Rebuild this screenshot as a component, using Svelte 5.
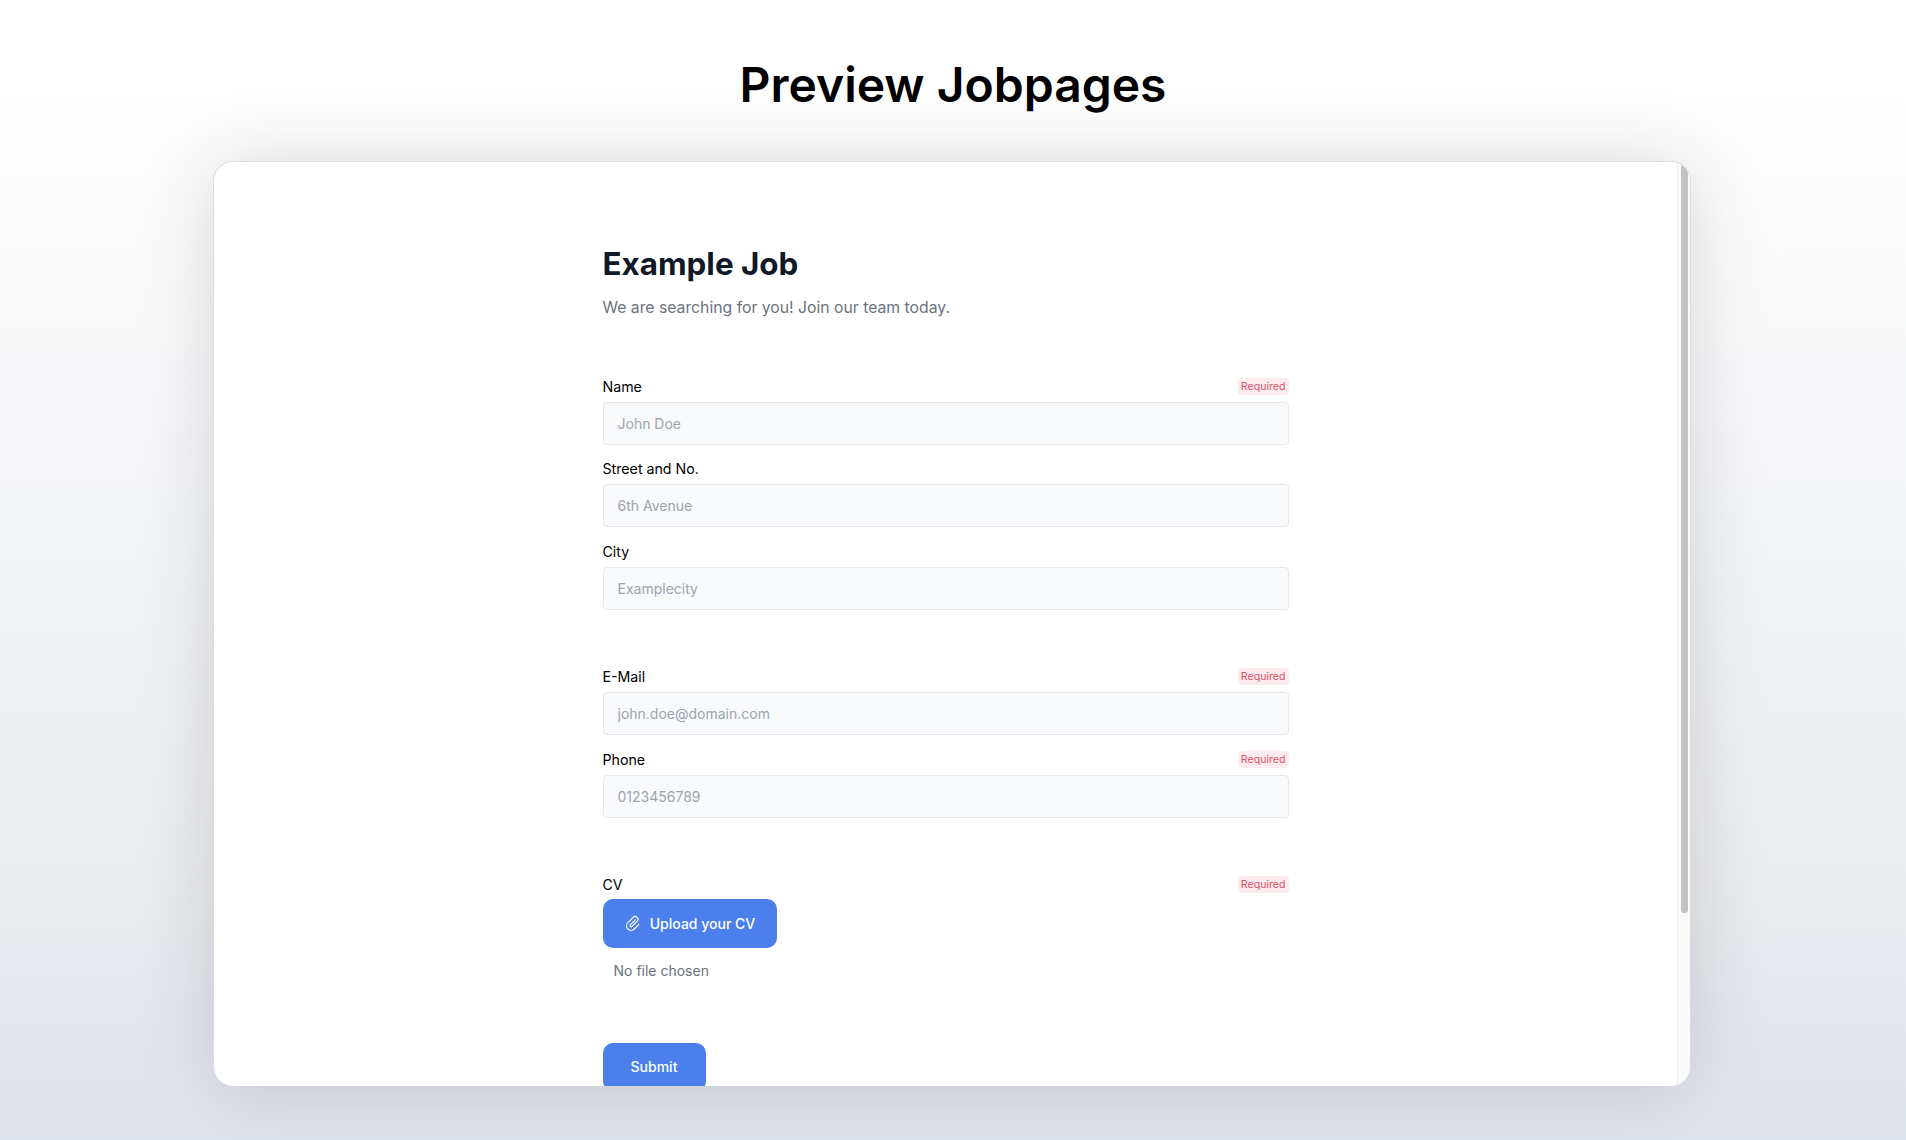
<script>
	const groups = [
		[
			{ label: "Name", placeholder: "John Doe", required: true },
			{ label: "Street and No.", placeholder: "6th Avenue" },
			{ label: "City", placeholder: "Examplecity" }
		],
		[
			{ label: "E-Mail", placeholder: "john.doe@domain.com", required: true },
			{ label: "Phone", placeholder: "0123456789", required: true }
		]
	];
</script>

<div class="page">
	<h1>Preview Jobpages</h1>
	<div class="frame">
		<div class="content">
			<form class="job">
				<h2>Example Job</h2>
				<p class="lead">We are searching for you! Join our team today.</p>

				{#each groups as group}
					<div class="group">
						{#each group as field}
							<div class="field">
								<div class="label_row">
									<span class="label">{field.label}</span>
									{#if field.required}<span class="badge">Required</span>{/if}
								</div>
								<input type="text" placeholder={field.placeholder} />
							</div>
						{/each}
					</div>
				{/each}

				<div class="group">
					<div class="label_row cv_row">
						<span class="label">CV</span>
						<span class="badge">Required</span>
					</div>
					<button type="button" class="btn upload">
						<svg width="18" height="18" viewBox="0 0 24 24" fill="none" stroke="currentColor" stroke-width="1.5" stroke-linecap="round" stroke-linejoin="round">
							<path d="M15.17 7.83l-6.86 6.86a1.5 1.5 0 0 0 2.12 2.12l7.2-7.2a3.75 3.75 0 0 0-5.3-5.3l-7.2 7.2a6 6 0 0 0 8.49 8.49l6.2-6.2" />
						</svg>
						Upload your CV
					</button>
					<div class="no_file">No file chosen</div>
				</div>

				<button type="button" class="btn submit">Submit</button>
			</form>
		</div>
		<div class="scrollbar"><div class="thumb"></div></div>
	</div>
</div>

<style>
	:global(body) {
		margin: 0;
		font-family: Inter, "Liberation Sans", sans-serif;
	}
	.page {
		height: 1140px;
		box-sizing: border-box;
		overflow: hidden;
		background: linear-gradient(to bottom, #ffffff 0%, #ffffff 7%, #e9ebef 79%, #dee2ea 100%);
		padding-top: 55px;
	}
	h1 {
		margin: 0;
		height: 60px;
		line-height: 60px;
		font-size: 48px;
		font-weight: 600;
		text-align: center;
		color: #000;
	}
	.frame {
		position: relative;
		display: flex;
		width: 1478px;
		height: 925px;
		margin: 46px auto 0;
		box-sizing: border-box;
		border: 1px solid #dcdddf;
		border-bottom: 0;
		border-radius: 20px;
		background: #fff;
		overflow: hidden;
		box-shadow: 0 0 80px rgba(0, 0, 0, 0.14);
		transform: translateX(-1px);
	}
	.content {
		flex: 1;
		min-width: 0;
	}
	.scrollbar {
		width: 13px;
		padding: 2px 2px 0 3px;
		box-sizing: border-box;
		background: #fafafa;
		border-left: 1px solid #ededed;
	}
	.thumb {
		height: 749px;
		border-radius: 4px;
		background: #c2c2c2;
	}
	.job {
		width: 686px;
		margin: 0 auto;
		padding-top: 83.5px;
	}
	h2 {
		margin: 0;
		font-size: 31.4px;
		line-height: 36px;
		font-weight: 650;
		color: #111827;
	}
	.lead {
		margin: 14.5px 0 0;
		font-size: 15.75px;
		line-height: 24px;
		color: #6b7280;
	}
	.group {
		margin-top: 57px;
	}
	.lead + .group {
		margin-top: 56.5px;
	}
	.field + .field {
		margin-top: 14.7px;
	}
	.label_row {
		display: flex;
		align-items: center;
		justify-content: space-between;
		height: 20px;
		margin-bottom: 5px;
	}
	.cv_row {
		margin-bottom: 4px;
	}
	.label {
		font-size: 14.2px;
		line-height: 20px;
		font-weight: 400;
		color: #000;
	}
	.badge {
		padding: 2px 3px;
		border-radius: 4px;
		background: #fdecee;
		color: #d9536b;
		font-size: 10.6px;
		line-height: 13px;
	}
	input {
		display: block;
		width: 100%;
		height: 43px;
		box-sizing: border-box;
		padding: 0 14px;
		border: 1px solid #e5e7eb;
		border-radius: 4px;
		background: #f9fafb;
		font: inherit;
		font-size: 14px;
		outline: none;
	}
	input::placeholder {
		color: #9ca3af;
		opacity: 1;
	}
	.btn {
		display: flex;
		align-items: center;
		justify-content: center;
		border: 0;
		border-radius: 10px;
		background: #4a7fec;
		color: #fff;
		font: inherit;
		font-size: 14px;
		font-weight: 500;
	}
	.upload {
		gap: 8px;
		width: 174px;
		height: 49px;
	}
	.no_file {
		margin: 13px 0 0 11px;
		font-size: 14px;
		line-height: 20px;
		color: #6b7280;
	}
	.submit {
		width: 103px;
		height: 48px;
		margin-top: 62px;
	}
</style>
